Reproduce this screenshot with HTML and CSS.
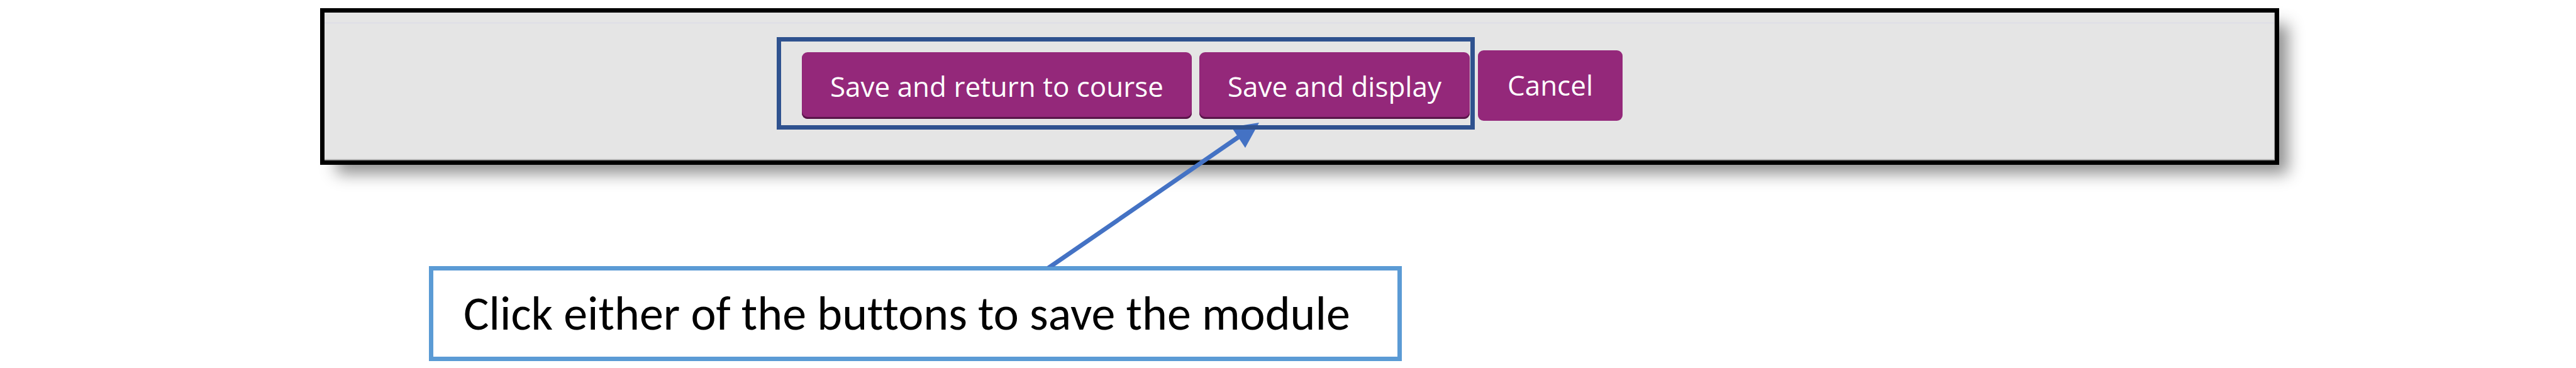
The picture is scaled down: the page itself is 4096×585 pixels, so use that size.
FILE: index.html
```html
<!DOCTYPE html>
<html lang="en">
<head>
<meta charset="utf-8">
<title>Save the module</title>
<link rel="stylesheet" href="styles.css">
</head>
<body>
<main class="page">
  <form class="panel">
    <div class="highlight">
      <button class="btn btn-save" type="button">Save and return to course</button>
      <button class="btn btn-save" type="button">Save and display</button>
      <svg class="arrow" viewBox="0 0 352 230" aria-hidden="true">
        <path d="M6 232 L308 24" fill="none" stroke="#4472c4" stroke-width="7"/>
        <path d="M341 1 L297 8 L319 41 Z" fill="#4472c4"/>
      </svg>
    </div>
    <button class="btn btn-cancel" type="button">Cancel</button>
  </form>
  <p class="callout">Click either of the buttons to save the module</p>
</main>
</body>
</html>
```
FILE: styles.css
```css
* {
  box-sizing: border-box;
}

body {
  margin: 0;
  background: #fff;
}

.page {
  padding: 13px 0 11px;
}

.panel {
  display: flex;
  align-items: flex-start;
  gap: 5px;
  margin: 0 11.52% 0 12.43%;
  padding: 39px 0 49px 17.55%;
  border: 7px solid #000;
  background: linear-gradient(#e0e0e6, #e0e0e6) 0 15px / 100% 3px no-repeat #e5e5e5;
  box-shadow: 20px 20px 24px -6px rgba(0, 0, 0, 0.44), inset -1px -2px 1px #a8a8a8;
  isolation: isolate;
}

.highlight {
  position: relative;
  display: flex;
  gap: 12px;
  padding: 17px 1px 10px 33px;
  border: 7px solid #2f528f;
}

.btn {
  border: 0;
  border-radius: 9px;
  background: #94287a;
  color: #fff;
  font-family: "Open Sans", "Noto Sans", sans-serif;
  font-size: 44px;
  line-height: 60px;
  white-space: nowrap;
}

.btn-save {
  padding: 24px 45px 22px;
  box-shadow: inset 0 -3px 1px #561447;
}

.btn-cancel {
  margin-top: 21px;
  padding: 25px 47px 27px;
}

/* Runs from the callout up to the save buttons, behind the highlight's edge. */
.arrow {
  position: absolute;
  z-index: -1;
  right: 325px;
  top: 128px;
  width: 352px;
  height: 230px;
}

.callout {
  width: 37.77%;
  margin: 161px 0 0 16.65%;
  padding: 24px 48px;
  border: 7px solid #5b9bd5;
  color: #000;
  font-family: Calibri, Carlito, Lato, sans-serif;
  font-size: 76px;
  font-variant-ligatures: none;
  line-height: 89px;
  white-space: nowrap;
}
```
